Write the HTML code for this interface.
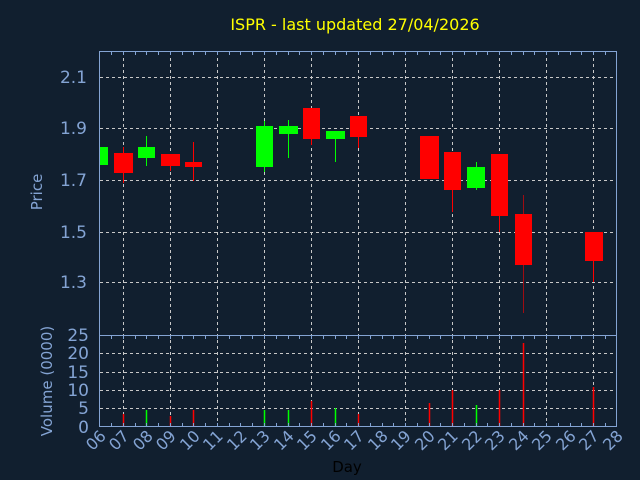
<!DOCTYPE html><html><head><meta charset="utf-8"><style>html,body{margin:0;padding:0;background:#111f2f}svg{display:block}</style></head><body>
<svg width="640" height="480" xmlns="http://www.w3.org/2000/svg" font-family="Liberation Sans, DejaVu Sans, sans-serif">
<rect width="640" height="480" fill="#111f2f"/>
<text x="355" y="30" fill="#ffff00" font-size="16" text-anchor="middle" font-family="DejaVu Sans, sans-serif">ISPR - last updated 27/04/2026</text>
<g stroke="#c8c8c8" stroke-dasharray="3,3" stroke-width="1">
<line x1="100" y1="77.5" x2="617" y2="77.5"/><line x1="100" y1="128.5" x2="617" y2="128.5"/><line x1="100" y1="180.5" x2="617" y2="180.5"/><line x1="100" y1="232.5" x2="617" y2="232.5"/><line x1="100" y1="282.5" x2="617" y2="282.5"/>
<line x1="100" y1="353.5" x2="617" y2="353.5"/><line x1="100" y1="372.5" x2="617" y2="372.5"/><line x1="100" y1="390.5" x2="617" y2="390.5"/><line x1="100" y1="408.5" x2="617" y2="408.5"/>
<line x1="123.5" y1="52" x2="123.5" y2="427"/><line x1="170.5" y1="52" x2="170.5" y2="427"/><line x1="217.5" y1="52" x2="217.5" y2="427"/><line x1="264.5" y1="52" x2="264.5" y2="427"/><line x1="311.5" y1="52" x2="311.5" y2="427"/><line x1="358.5" y1="52" x2="358.5" y2="427"/><line x1="405.5" y1="52" x2="405.5" y2="427"/><line x1="452.5" y1="52" x2="452.5" y2="427"/><line x1="499.5" y1="52" x2="499.5" y2="427"/><line x1="546.5" y1="52" x2="546.5" y2="427"/><line x1="593.5" y1="52" x2="593.5" y2="427"/>
</g>
<g>
<rect x="100" y="147" width="8" height="18" fill="#00ff00"/>
<line x1="123.5" y1="147" x2="123.5" y2="183" stroke="#ff0000"/><rect x="114" y="153" width="19" height="20" fill="#ff0000"/>
<line x1="146.5" y1="136" x2="146.5" y2="166" stroke="#00ff00"/><rect x="138" y="147" width="17" height="11" fill="#00ff00"/>
<line x1="170.5" y1="154" x2="170.5" y2="171" stroke="#ff0000"/><rect x="161" y="154" width="19" height="12" fill="#ff0000"/>
<line x1="193.5" y1="142" x2="193.5" y2="181" stroke="#ff0000"/><rect x="185" y="162" width="17" height="5" fill="#ff0000"/>
<line x1="264.5" y1="121" x2="264.5" y2="172" stroke="#00ff00"/><rect x="256" y="126" width="17" height="41" fill="#00ff00"/>
<line x1="288.5" y1="120" x2="288.5" y2="158" stroke="#00ff00"/><rect x="279" y="126" width="19" height="8" fill="#00ff00"/>
<line x1="311.5" y1="108" x2="311.5" y2="145" stroke="#ff0000"/><rect x="303" y="108" width="17" height="31" fill="#ff0000"/>
<line x1="335.5" y1="131" x2="335.5" y2="162" stroke="#00ff00"/><rect x="326" y="131" width="19" height="8" fill="#00ff00"/>
<line x1="358.5" y1="116" x2="358.5" y2="148" stroke="#ff0000"/><rect x="350" y="116" width="17" height="21" fill="#ff0000"/>
<rect x="420" y="136" width="19" height="43" fill="#ff0000"/>
<line x1="452.5" y1="152" x2="452.5" y2="212" stroke="#ff0000"/><rect x="444" y="152" width="17" height="38" fill="#ff0000"/>
<line x1="476.5" y1="162" x2="476.5" y2="190" stroke="#00ff00"/><rect x="467" y="167" width="18" height="21" fill="#00ff00"/>
<line x1="499.5" y1="154" x2="499.5" y2="232" stroke="#ff0000"/><rect x="491" y="154" width="17" height="62" fill="#ff0000"/>
<line x1="523.5" y1="195" x2="523.5" y2="313" stroke="#ff0000" stroke-opacity="0.6"/><rect x="515" y="214" width="17" height="51" fill="#ff0000"/>
<line x1="593.5" y1="232" x2="593.5" y2="282" stroke="#ff0000"/><rect x="585" y="232" width="18" height="29" fill="#ff0000"/>
</g>
<g stroke-width="1.5">
<line x1="123.5" y1="427" x2="123.5" y2="414" stroke="#ff0000"/>
<line x1="146.5" y1="427" x2="146.5" y2="410" stroke="#00ff00"/>
<line x1="170.5" y1="427" x2="170.5" y2="416" stroke="#ff0000"/>
<line x1="193.5" y1="427" x2="193.5" y2="410" stroke="#ff0000"/>
<line x1="264.5" y1="427" x2="264.5" y2="410" stroke="#00ff00"/>
<line x1="288.5" y1="427" x2="288.5" y2="410" stroke="#00ff00"/>
<line x1="311.5" y1="427" x2="311.5" y2="401" stroke="#ff0000"/>
<line x1="335.5" y1="427" x2="335.5" y2="408" stroke="#00ff00"/>
<line x1="358.5" y1="427" x2="358.5" y2="414" stroke="#ff0000"/>
<line x1="429.5" y1="427" x2="429.5" y2="403" stroke="#ff0000"/>
<line x1="452.5" y1="427" x2="452.5" y2="390" stroke="#ff0000"/>
<line x1="476.5" y1="427" x2="476.5" y2="405" stroke="#00ff00"/>
<line x1="499.5" y1="427" x2="499.5" y2="390" stroke="#ff0000"/>
<line x1="523.5" y1="427" x2="523.5" y2="343" stroke="#ff0000"/>
<line x1="593.5" y1="427" x2="593.5" y2="387" stroke="#ff0000"/>
</g>
<g stroke="#84a4d4" fill="none" stroke-width="1">
<rect x="99.5" y="51.5" width="517" height="375"/>
<line x1="99.5" y1="335.5" x2="616.5" y2="335.5"/>
<path d="M111.5 52v3M123.5 52v3M135.5 52v3M146.5 52v3M158.5 52v3M170.5 52v3M182.5 52v3M193.5 52v3M205.5 52v3M217.5 52v3M229.5 52v3M240.5 52v3M252.5 52v3M264.5 52v3M276.5 52v3M288.5 52v3M299.5 52v3M311.5 52v3M323.5 52v3M335.5 52v3M346.5 52v3M358.5 52v3M370.5 52v3M382.5 52v3M393.5 52v3M405.5 52v3M417.5 52v3M429.5 52v3M440.5 52v3M452.5 52v3M464.5 52v3M476.5 52v3M487.5 52v3M499.5 52v3M511.5 52v3M523.5 52v3M534.5 52v3M546.5 52v3M558.5 52v3M570.5 52v3M581.5 52v3M593.5 52v3M605.5 52v3"/>
<path d="M111.5 336v3M123.5 336v3M135.5 336v3M146.5 336v3M158.5 336v3M170.5 336v3M182.5 336v3M193.5 336v3M205.5 336v3M217.5 336v3M229.5 336v3M240.5 336v3M252.5 336v3M264.5 336v3M276.5 336v3M288.5 336v3M299.5 336v3M311.5 336v3M323.5 336v3M335.5 336v3M346.5 336v3M358.5 336v3M370.5 336v3M382.5 336v3M393.5 336v3M405.5 336v3M417.5 336v3M429.5 336v3M440.5 336v3M452.5 336v3M464.5 336v3M476.5 336v3M487.5 336v3M499.5 336v3M511.5 336v3M523.5 336v3M534.5 336v3M546.5 336v3M558.5 336v3M570.5 336v3M581.5 336v3M593.5 336v3M605.5 336v3"/>
<path d="M111.5 426v-3M123.5 426v-3M135.5 426v-3M146.5 426v-3M158.5 426v-3M170.5 426v-3M182.5 426v-3M193.5 426v-3M205.5 426v-3M217.5 426v-3M229.5 426v-3M240.5 426v-3M252.5 426v-3M264.5 426v-3M276.5 426v-3M288.5 426v-3M299.5 426v-3M311.5 426v-3M323.5 426v-3M335.5 426v-3M346.5 426v-3M358.5 426v-3M370.5 426v-3M382.5 426v-3M393.5 426v-3M405.5 426v-3M417.5 426v-3M429.5 426v-3M440.5 426v-3M452.5 426v-3M464.5 426v-3M476.5 426v-3M487.5 426v-3M499.5 426v-3M511.5 426v-3M523.5 426v-3M534.5 426v-3M546.5 426v-3M558.5 426v-3M570.5 426v-3M581.5 426v-3M593.5 426v-3M605.5 426v-3"/>
</g>
<g fill="#84a4d4" font-size="17" text-anchor="end" font-family="DejaVu Sans, sans-serif">
<text x="87" y="83">2.1</text><text x="87" y="134">1.9</text><text x="87" y="186">1.7</text><text x="87" y="238">1.5</text><text x="87" y="288">1.3</text>
<text x="89" y="341">25</text><text x="89" y="359">20</text><text x="89" y="378">15</text><text x="89" y="396">10</text><text x="89" y="414">5</text><text x="89" y="433">0</text>
</g>
<text transform="translate(42,192) rotate(-90)" fill="#84a4d4" font-size="15" text-anchor="middle" font-family="DejaVu Sans, sans-serif">Price</text>
<text transform="translate(52,381) rotate(-90)" fill="#84a4d4" font-size="15" text-anchor="middle" font-family="DejaVu Sans, sans-serif">Volume (0000)</text>
<g fill="#84a4d4" font-size="16" text-anchor="end" font-family="DejaVu Sans, sans-serif">
<text transform="translate(107,437) rotate(-45)">06</text><text transform="translate(130,437) rotate(-45)">07</text><text transform="translate(154,437) rotate(-45)">08</text><text transform="translate(177,437) rotate(-45)">09</text><text transform="translate(201,437) rotate(-45)">10</text><text transform="translate(224,437) rotate(-45)">11</text><text transform="translate(248,437) rotate(-45)">12</text><text transform="translate(271,437) rotate(-45)">13</text><text transform="translate(295,437) rotate(-45)">14</text><text transform="translate(318,437) rotate(-45)">15</text><text transform="translate(342,437) rotate(-45)">16</text><text transform="translate(365,437) rotate(-45)">17</text><text transform="translate(389,437) rotate(-45)">18</text><text transform="translate(412,437) rotate(-45)">19</text><text transform="translate(436,437) rotate(-45)">20</text><text transform="translate(459,437) rotate(-45)">21</text><text transform="translate(483,437) rotate(-45)">22</text><text transform="translate(506,437) rotate(-45)">23</text><text transform="translate(530,437) rotate(-45)">24</text><text transform="translate(553,437) rotate(-45)">25</text><text transform="translate(577,437) rotate(-45)">26</text><text transform="translate(600,437) rotate(-45)">27</text><text transform="translate(624,437) rotate(-45)">28</text>
</g>
<text x="347" y="472" fill="#000000" font-size="15" text-anchor="middle" font-family="DejaVu Sans, sans-serif">Day</text>
</svg>
</body></html>
